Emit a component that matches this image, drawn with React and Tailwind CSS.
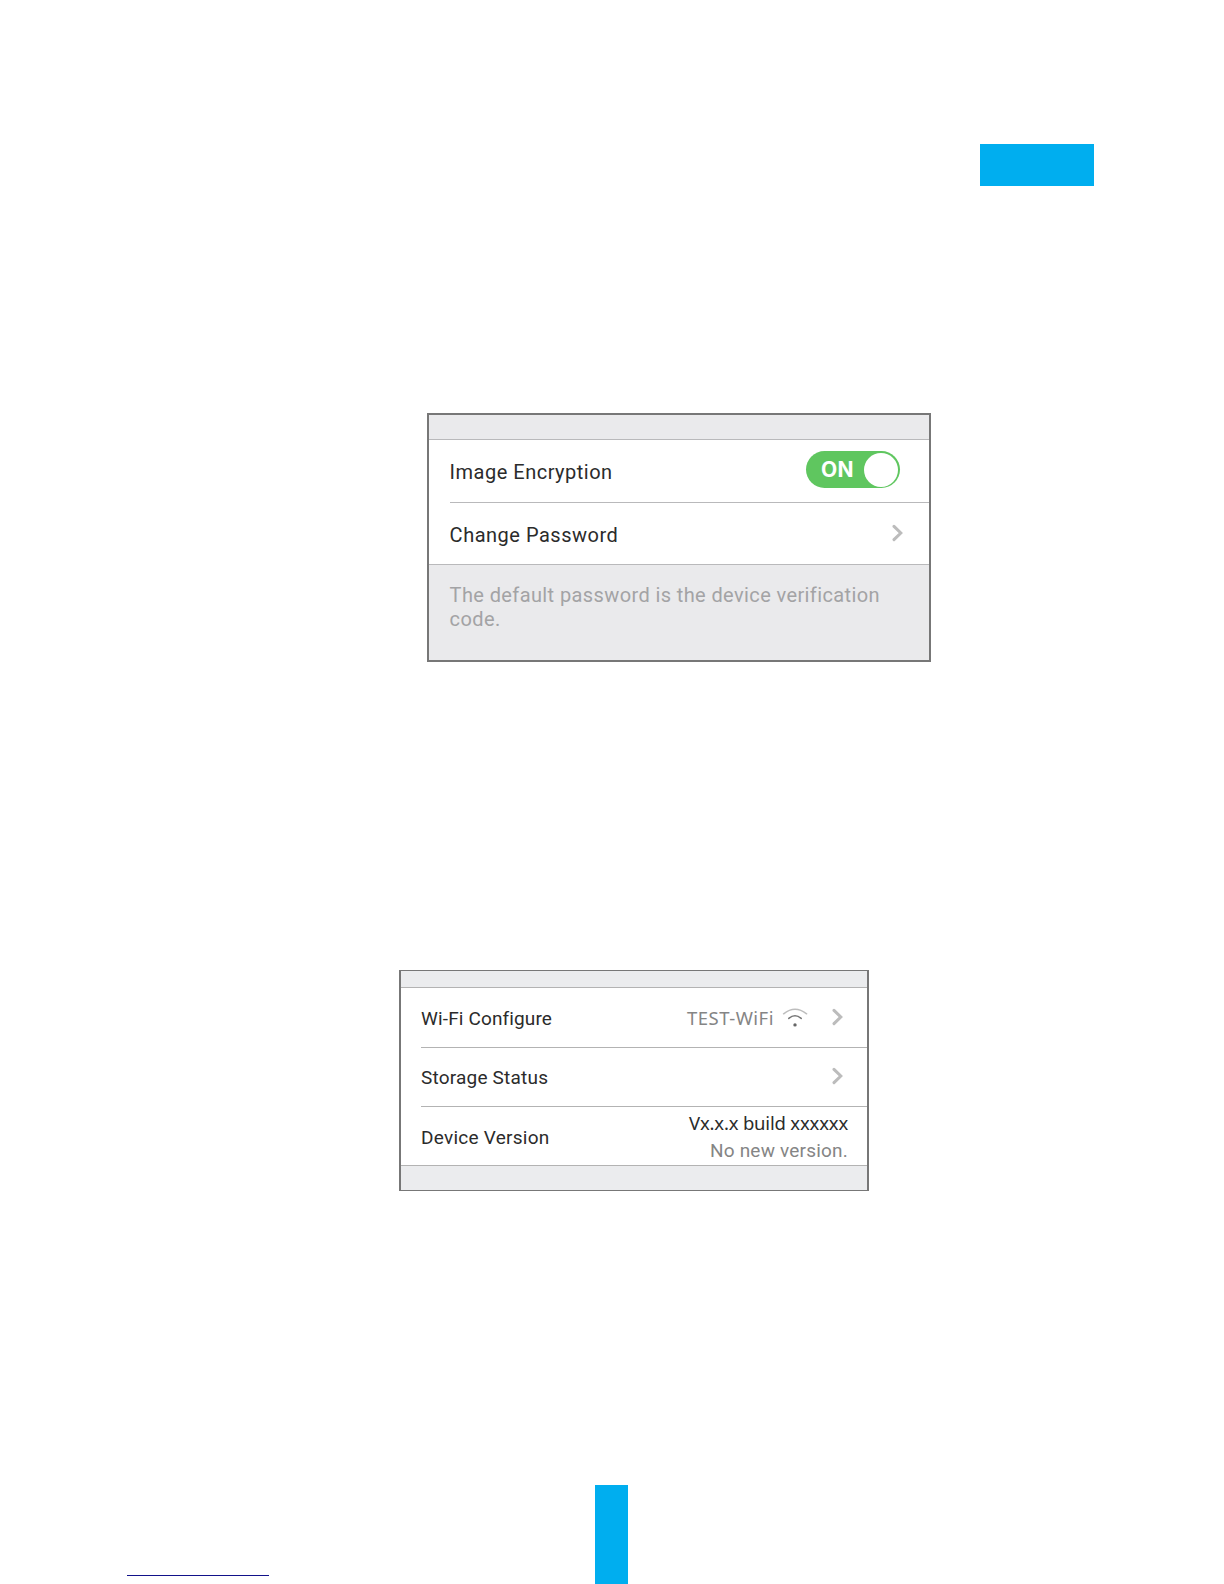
function Chevron({ className = "" }) {
  return (
    <svg className={className} width="12" height="18" viewBox="0 0 12 18" fill="none" stroke="#bcbcbc" strokeWidth="3" strokeLinecap="round">
      <path d="M2 2.4 8.8 9 2 15.6" />
    </svg>
  );
}

function WifiIcon() {
  return (
    <svg className="ml-[8px] mr-px mt-[20px] shrink-0" width="26" height="21" viewBox="0 0 26 21" fill="none" strokeLinecap="round">
      <path d="M1.6 5.8Q13-3.2 24.6 5.8" stroke="#bdbdbd" strokeWidth="1.5" />
      <path d="M6.8 10.4Q13 5.2 19.2 10.4" stroke="#777" strokeWidth="1.5" />
      <circle cx="13" cy="16.9" r="1.7" fill="#666" />
    </svg>
  );
}

function EncryptionCard() {
  return (
    <section className="ml-[427px] mt-[227px] flex h-[249px] w-[504px] flex-col border-2 border-[#777] bg-[#eaeaec] text-[20px] leading-[24px]">
      <div className="h-[24px] shrink-0" />
      <div className="h-[126px] shrink-0 border-y border-[#b9b9bb] bg-white pl-[21px] text-[#2b2b2b]">
        <div className="flex h-[63px] items-start justify-between border-b border-[#b9b9bb]">
          <span className="-ml-[0.4px] mt-[20px] tracking-[0.5px]">Image Encryption</span>
          <div className="mr-[29px] mt-[11px] flex h-[37px] w-[94px] items-center justify-between rounded-full bg-[#5fc65f] pl-[15px] pr-[2px]">
            <span className="font-['Inter'] text-[21px] font-bold tracking-[0.4px] text-white">ON</span>
            <div className="size-[34px] rounded-full bg-white" />
          </div>
        </div>
        <div className="flex items-start justify-between">
          <span className="-ml-[0.4px] mt-[20px] tracking-[0.51px]">Change Password</span>
          <Chevron className="mr-[25px] mt-[21px]" />
        </div>
      </div>
      <p className="whitespace-nowrap pl-[20.6px] pt-[18px] tracking-[0.39px] text-[#a3a3a5]">
        The default password is the device verification
        <br />
        code.
      </p>
    </section>
  );
}

function DeviceCard() {
  return (
    <section className="ml-[399px] mt-[308px] flex h-[221px] w-[470px] flex-col border-x-2 border-y border-[#777] bg-[#ebecee] text-[19px] leading-[24px]">
      <div className="h-[16px] shrink-0" />
      <div className="h-[179px] shrink-0 border-y border-[#b3b3b3] bg-white pl-[20px] text-[#2b2b2b]">
        <div className="flex h-[60px] items-start border-b border-[#b3b3b3]">
          <span className="mt-[19px] tracking-[0.14px]">Wi-Fi Configure</span>
          <span className="ml-auto mt-[18px] font-['Noto_Sans'] text-[18.5px] tracking-[0.5px] text-[#858585]">TEST-WiFi</span>
          <WifiIcon />
          <Chevron className="ml-[23px] mr-[23px] mt-[20px]" />
        </div>
        <div className="flex h-[59px] items-start justify-between border-b border-[#b3b3b3]">
          <span className="mt-[18px] tracking-[0.2px]">Storage Status</span>
          <Chevron className="mr-[23px] mt-[19px]" />
        </div>
        <div className="flex items-start justify-between">
          <span className="mt-[19px] tracking-[0.26px]">Device Version</span>
          <div className="mr-[19px] mt-[4px] flex flex-col items-end">
            <span className="font-['Noto_Sans'] text-[18.5px] tracking-[-0.18px]">Vx.x.x build xxxxxx</span>
            <span className="mt-[4px] tracking-[0.2px] text-[#858585]">No new version.</span>
          </div>
        </div>
      </div>
    </section>
  );
}

export default function App() {
  return (
    <main className="flex h-[1584px] w-[1224px] flex-col overflow-hidden bg-white font-['Roboto',sans-serif]">
      <div className="ml-[980px] mt-[144px] h-[42px] w-[114px] shrink-0 bg-[#00aeef]" />
      <EncryptionCard />
      <DeviceCard />
      <footer className="mt-[294px] flex h-[99px] shrink-0 items-start pl-[127px]">
        <div className="mt-[90px] h-px w-[142px] bg-[#12128a]" />
        <div className="ml-[326px] h-[99px] w-[33px] bg-[#00aeef]" />
      </footer>
    </main>
  );
}
